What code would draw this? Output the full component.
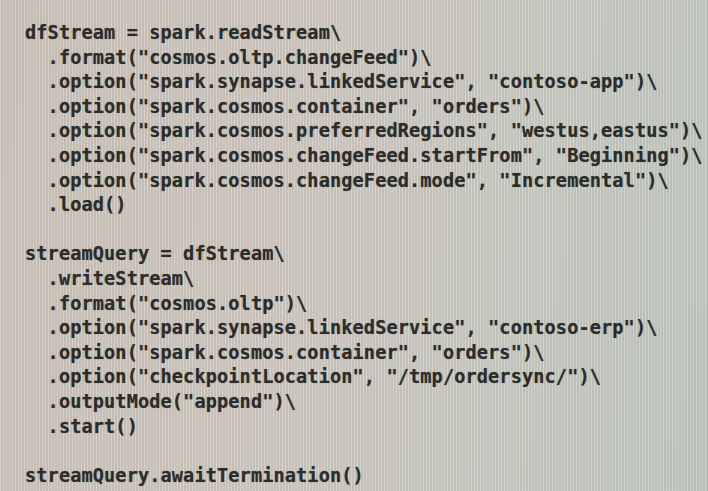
const LINES = [
  'dfStream = spark.readStream\\',
  '  .format("cosmos.oltp.changeFeed")\\',
  '  .option("spark.synapse.linkedService", "contoso-app")\\',
  '  .option("spark.cosmos.container", "orders")\\',
  '  .option("spark.cosmos.preferredRegions", "westus,eastus")\\',
  '  .option("spark.cosmos.changeFeed.startFrom", "Beginning")\\',
  '  .option("spark.cosmos.changeFeed.mode", "Incremental")\\',
  '  .load()',
  '',
  'streamQuery = dfStream\\',
  '  .writeStream\\',
  '  .format("cosmos.oltp")\\',
  '  .option("spark.synapse.linkedService", "contoso-erp")\\',
  '  .option("spark.cosmos.container", "orders")\\',
  '  .option("checkpointLocation", "/tmp/ordersync/")\\',
  '  .outputMode("append")\\',
  '  .start()',
  '',
  'streamQuery.awaitTermination()',
];

export default function App() {
  return (
    <div className="h-[491px] w-[708px] overflow-hidden bg-[linear-gradient(100deg,#cfc6bc_0%,#d2cbc2_40%,#cccdc5_70%,#c3cac3_100%)]">
      <div className="h-full w-full bg-[repeating-linear-gradient(90deg,rgba(255,255,255,0.14)_0px,rgba(255,255,255,0.14)_1.5px,rgba(0,0,0,0.06)_1.5px,rgba(0,0,0,0.06)_3px)] pl-[25px] pt-[21px]">
        <div className="font-['DejaVu_Sans_Mono',monospace] text-[18.6px] leading-[24.6px] font-semibold tracking-[0.1px] text-[#2c2c2a] [text-shadow:0_0_1px_rgba(40,40,40,0.45)]">
          {LINES.map((line, i) => (
            <div key={i} className="h-[24.6px] whitespace-pre">
              {line}
            </div>
          ))}
        </div>
      </div>
    </div>
  );
}
